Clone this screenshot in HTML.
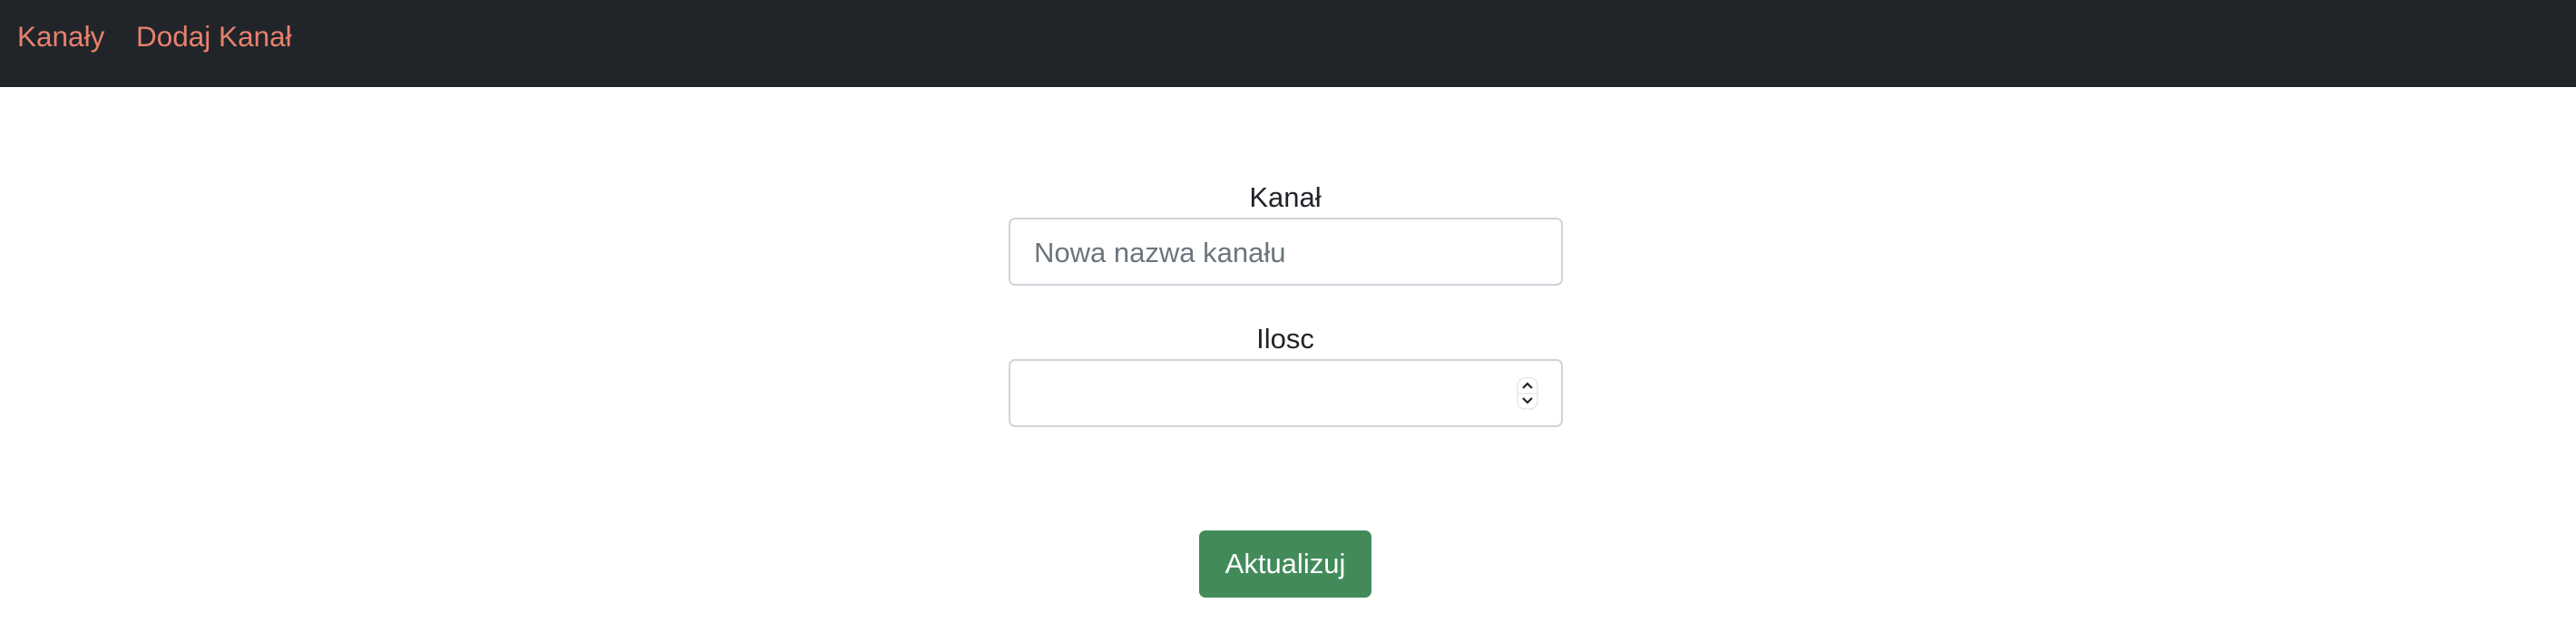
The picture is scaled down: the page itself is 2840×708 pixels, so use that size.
<!DOCTYPE html>
<html><head><meta charset="utf-8"><style>
*{box-sizing:border-box;margin:0;padding:0}
body{width:2840px;height:708px;background:#fff;font-family:"Liberation Sans",sans-serif;position:relative;overflow:hidden}
nav{position:absolute;left:0;top:0;width:2840px;height:96px;background:#212529}
nav span{position:absolute;top:22px;font-size:31.5px;color:#e8806e;line-height:36px}
.lbl{position:absolute;left:1112px;width:610px;text-align:center;font-size:31px;color:#212529;line-height:36px}
.inp{position:absolute;left:1112px;width:611px;height:75px;border:2px solid #ced4da;border-radius:7px;background:#fff}
.ph{position:absolute;left:26px;top:19px;font-size:31px;color:#6c757d;line-height:36px}
.btn{position:absolute;left:1322px;top:585px;width:190px;height:74px;background:#428a5a;border-radius:7px;color:#fff;font-size:31px;line-height:74px;text-align:center}
</style></head><body>
<nav><span style="left:19px">Kanały</span><span style="left:150px">Dodaj Kanał</span></nav>
<div class="lbl" style="top:200px">Kanał</div>
<div class="inp" style="top:240px"><div class="ph">Nowa nazwa kanału</div></div>
<div class="lbl" style="top:356px">Ilosc</div>
<div class="inp" style="top:396px">
<svg style="position:absolute;left:558px;top:18px" width="24" height="36" viewBox="0 0 24 36"><rect x="1" y="1" width="22" height="34" rx="8" fill="#fff" stroke="#ddd"/><line x1="1" y1="18" x2="23" y2="18" stroke="#ddd"/><path d="M7 12 L12 7 L17 12" fill="none" stroke="#222" stroke-width="2.2"/><path d="M7 23 L12 28 L17 23" fill="none" stroke="#222" stroke-width="2.2"/></svg>
</div>
<div class="btn">Aktualizuj</div>
</body></html>
